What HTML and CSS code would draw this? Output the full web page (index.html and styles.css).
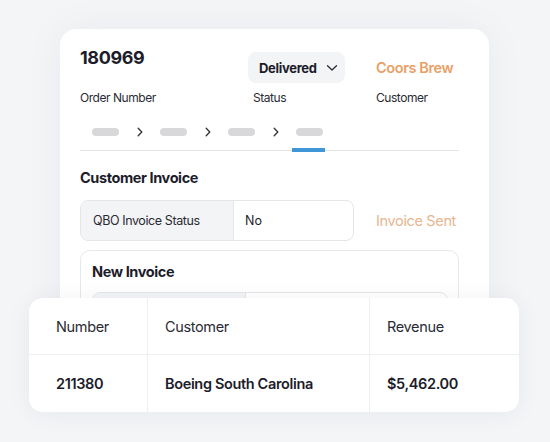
FILE: index.html
```html
<!DOCTYPE html>
<html>
<head>
<meta charset="utf-8">
<link rel="stylesheet" href="styles.css">
</head>
<body>
<div class="stage">
  <div class="main-card">
    <div class="head-grid">
      <div class="order-no">180969</div>
      <div class="pill">Delivered
        <svg width="12" height="8" viewBox="0 0 12 8"><path d="M1.5 1.8 L6 6 L10.5 1.8" fill="none" stroke="#2a2a36" stroke-width="1.3" stroke-linecap="round" stroke-linejoin="round"/></svg>
      </div>
      <div class="customer-name">Coors Brew</div>
      <div class="label">Order Number</div>
      <div class="label label-status">Status</div>
      <div class="label">Customer</div>
    </div>
    <div class="steps">
      <span class="step"></span>
      <svg class="chev" width="6" height="10" viewBox="0 0 6 10"><path d="M1.2 1.2 L4.8 5 L1.2 8.8" fill="none" stroke="#333" stroke-width="1.3" stroke-linecap="round" stroke-linejoin="round"/></svg>
      <span class="step"></span>
      <svg class="chev" width="6" height="10" viewBox="0 0 6 10"><path d="M1.2 1.2 L4.8 5 L1.2 8.8" fill="none" stroke="#333" stroke-width="1.3" stroke-linecap="round" stroke-linejoin="round"/></svg>
      <span class="step"></span>
      <svg class="chev" width="6" height="10" viewBox="0 0 6 10"><path d="M1.2 1.2 L4.8 5 L1.2 8.8" fill="none" stroke="#333" stroke-width="1.3" stroke-linecap="round" stroke-linejoin="round"/></svg>
      <span class="step step-active"></span>
    </div>
    <div class="rule"></div>
    <h2 class="section-title">Customer Invoice</h2>
    <div class="invoice-row">
      <div class="kv">
        <div class="kv-key">QBO Invoice Status</div>
        <div class="kv-val">No</div>
      </div>
      <div class="sent">Invoice Sent</div>
    </div>
    <div class="new-invoice">
      <h3 class="section-title">New Invoice</h3>
      <div class="kv kv-wide">
        <div class="kv-key kv-key-wide"></div>
        <div class="kv-val"></div>
      </div>
    </div>
  </div>
  <div class="table-card">
    <div class="trow thead">
      <div class="cell c1">Number</div>
      <div class="cell c2">Customer</div>
      <div class="cell c3">Revenue</div>
    </div>
    <div class="trow tbody">
      <div class="cell c1">211380</div>
      <div class="cell c2">Boeing South Carolina</div>
      <div class="cell c3">$5,462.00</div>
    </div>
  </div>
</div>
</body>
</html>
```

FILE: styles.css
```css
* { box-sizing: border-box; }
html, body { margin: 0; padding: 0; }
body {
  width: 550px;
  height: 442px;
  overflow: hidden;
  background: #f4f5f7;
  font-family: Inter, "Liberation Sans", sans-serif;
  color: #1c1c2a;
}
.stage { padding-top: 29px; }
.main-card {
  margin-left: 60px;
  width: 429px;
  height: 301px;
  background: #fff;
  border-radius: 16px;
  padding: 18px 30px 0 20px;
  box-shadow: 0 0 40px rgba(20, 30, 60, 0.05);
}
.head-grid {
  display: grid;
  grid-template-columns: 168px 128px 1fr;
  grid-template-rows: 38px auto;
  align-items: center;
}
.order-no {
  font-size: 18px;
  font-weight: 700;
  letter-spacing: -0.4px;
  align-self: start;
  line-height: 22px;
}
.pill {
  justify-self: start;
  width: 97px;
  height: 31px;
  margin-top: 3px;
  background: #f3f4f6;
  border-radius: 8px;
  display: flex;
  align-items: center;
  gap: 9px;
  padding-left: 11px;
  font-size: 13px;
  font-weight: 700;
  letter-spacing: -0.3px;
}
.customer-name {
  margin-top: 2px;
  font-size: 14.5px;
  font-weight: 600;
  color: #e9a066;
  letter-spacing: -0.4px;
}
.label {
  font-size: 12px;
  color: #2a2a33;
  letter-spacing: -0.45px;
  margin-top: 6px;
  line-height: 14px;
}
.label-status { padding-left: 5px; }
.steps {
  display: flex;
  align-items: center;
  padding-left: 12px;
  margin-top: 22px;
  height: 10px;
}
.step {
  width: 27px;
  height: 8px;
  border-radius: 4px;
  background: #d8d8da;
}
.chev { margin: 0 17px 0 18px; }
.rule {
  margin-top: 13px;
  height: 1px;
  background: #e3e5e8;
  position: relative;
}
.rule::after {
  content: "";
  position: absolute;
  left: 212px;
  top: -2px;
  width: 33px;
  height: 4px;
  background: #3f97d8;
}
.section-title {
  margin: 0;
  font-size: 14.5px;
  font-weight: 700;
  letter-spacing: -0.4px;
  line-height: 18px;
}
h2.section-title { margin-top: 18px; }
.invoice-row {
  display: flex;
  align-items: center;
  margin-top: 13px;
}
.kv {
  display: flex;
  width: 274px;
  height: 41px;
  border: 1px solid #e4e6e9;
  border-radius: 8px;
  overflow: hidden;
}
.kv-key {
  width: 153px;
  background: #f3f4f6;
  border-right: 1px solid #e4e6e9;
  display: flex;
  align-items: center;
  padding-left: 12px;
  font-size: 12.5px;
  color: #2a2a33;
  letter-spacing: -0.4px;
}
.kv-val {
  flex: 1;
  display: flex;
  align-items: center;
  padding-left: 11px;
  font-size: 12.5px;
  color: #1c1c2a;
}
.sent {
  margin-left: 22px;
  font-size: 14.5px;
  color: #e8b58e;
  letter-spacing: -0.35px;
}
.new-invoice {
  margin-top: 9px;
  width: 379px;
  height: 80px;
  border: 1px solid #e6e8eb;
  border-radius: 10px;
  padding: 12px 10px 0 11px;
}
.kv-wide {
  width: 356px;
  margin-top: 11px;
}
.kv-key-wide { width: 153px; }
.table-card {
  position: relative;
  margin: -32px 0 0 29px;
  width: 490px;
  height: 114px;
  background: #fff;
  border-radius: 14px;
  box-shadow: 0 2px 24px rgba(20, 30, 60, 0.06);
  overflow: hidden;
}
.trow {
  display: grid;
  grid-template-columns: 118px 222px 1fr;
}
.thead { height: 57px; border-bottom: 1px solid #eeeff1; }
.tbody { height: 57px; }
.cell {
  display: flex;
  align-items: center;
  font-size: 14.5px;
  letter-spacing: -0.35px;
}
.c1 { padding-left: 27px; }
.c2 { padding-left: 17px; border-left: 1px solid #eeeff1; }
.c3 { padding-left: 17px; border-left: 1px solid #eeeff1; }
.thead .cell { color: #2a2a33; }
.tbody .cell { font-weight: 600; color: #1c1c2a; }
```
